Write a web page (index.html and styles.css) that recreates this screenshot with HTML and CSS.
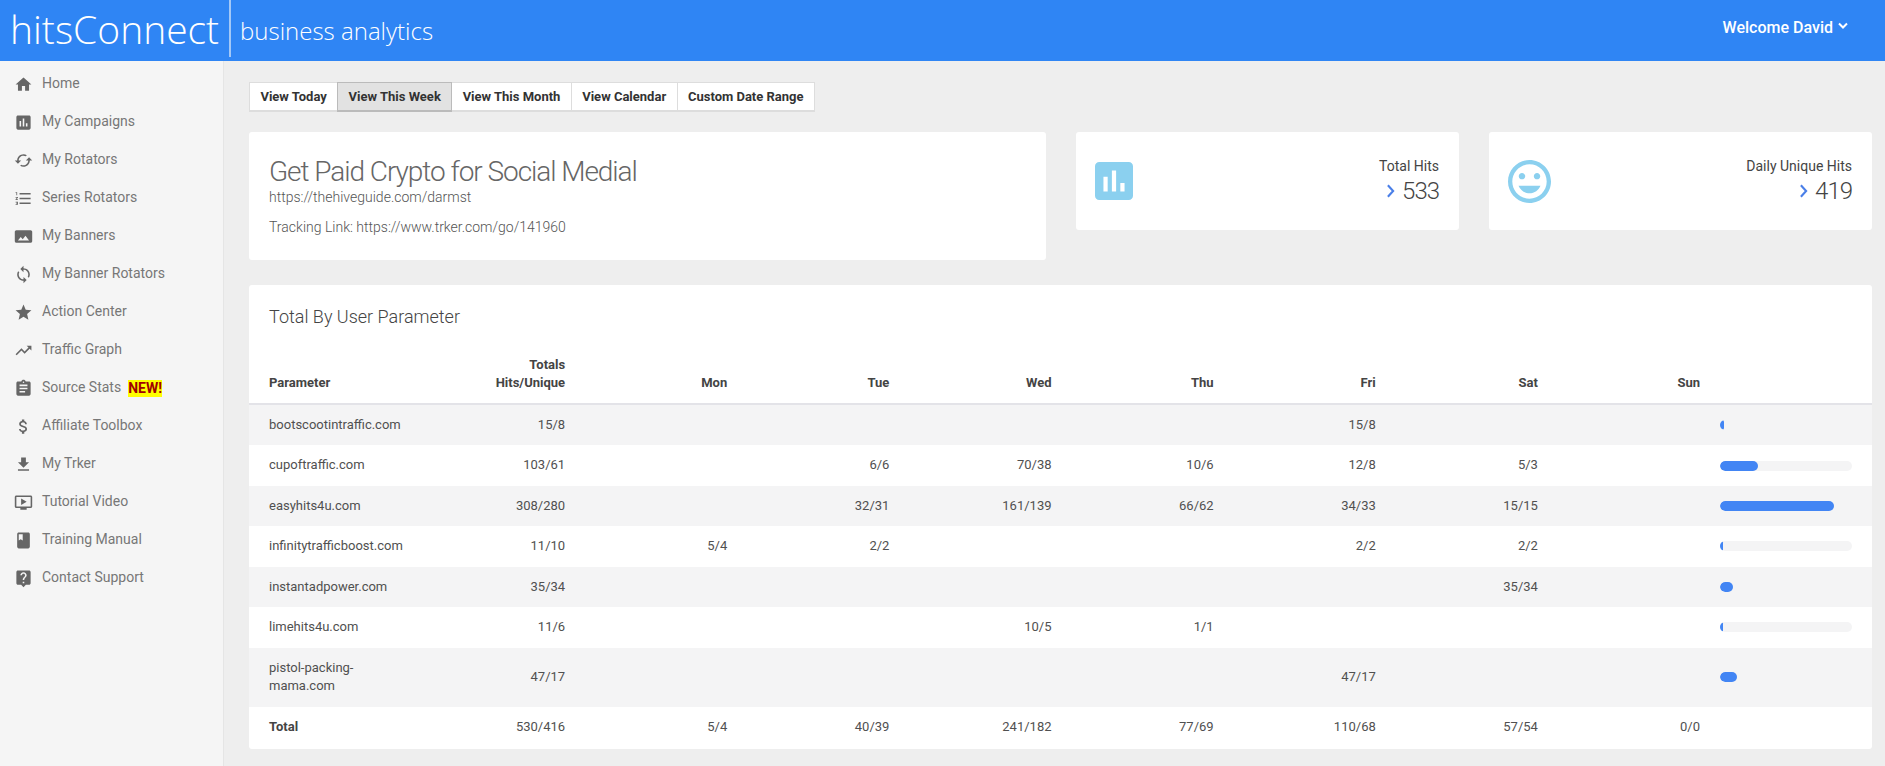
FILE: index.html
```html
<!DOCTYPE html>
<html lang="en">
<head>
  <meta charset="UTF-8" />
  <meta name="viewport" content="width=device-width, initial-scale=1.0"/>
  <title>hitsConnect</title>
  <link rel="stylesheet" href="styles.css">
</head>
<body>

  <header class="topbar">
    <div class="brand">hitsConnect</div>
    <div class="tagline">business analytics</div>
    <div class="welcome">Welcome David
      <svg class="caret" viewBox="0 0 24 24"><path d="M4 7l8 8 8-8" fill="none" stroke="#fff" stroke-width="4"/></svg>
    </div>
  </header>

  <div class="layout">
    <nav class="sidebar">
      <a class="nav-item"><svg viewBox="0 0 24 24"><path d="M10 20v-6h4v6h5v-8h3L12 3 2 12h3v8z"/></svg>Home</a>
      <a class="nav-item"><svg viewBox="0 0 24 24"><path d="M19 3H5c-1.1 0-2 .9-2 2v14c0 1.1.9 2 2 2h14c1.1 0 2-.9 2-2V5c0-1.1-.9-2-2-2zM9 17H7v-7h2v7zm4 0h-2V7h2v10zm4 0h-2v-4h2v4z"/></svg>My Campaigns</a>
      <a class="nav-item"><svg viewBox="0 0 24 24"><path d="M19 8l-4 4h3c0 3.31-2.69 6-6 6-1.01 0-1.97-.25-2.8-.7l-1.46 1.46C8.97 19.54 10.43 20 12 20c4.42 0 8-3.58 8-8h3l-4-4zM6 12c0-3.31 2.69-6 6-6 1.01 0 1.97.25 2.8.7l1.46-1.46C15.03 4.46 13.57 4 12 4c-4.42 0-8 3.58-8 8H1l4 4 4-4H6z"/></svg>My Rotators</a>
      <a class="nav-item"><svg viewBox="0 0 24 24"><path d="M2 17h2v.5H3v1h1v.5H2v1h3v-4H2v1zm1-9h1V4H2v1h1v3zm-1 3h1.8L2 13.1v.9h3v-1H3.2L5 10.9V10H2v1zm5-6v2h14V5H7zm0 14h14v-2H7v2zm0-6h14v-2H7v2z"/></svg>Series Rotators</a>
      <a class="nav-item"><svg viewBox="0 0 24 24"><path d="M23 18V6c0-1.1-.9-2-2-2H3c-1.1 0-2 .9-2 2v12c0 1.1.9 2 2 2h18c1.1 0 2-.9 2-2zM8.5 12.5l2.5 3.01L14.5 11l4.5 6H5l3.5-4.5z"/></svg>My Banners</a>
      <a class="nav-item"><svg viewBox="0 0 24 24"><path d="M12 4V1L8 5l4 4V6c3.31 0 6 2.69 6 6 0 1.01-.25 1.97-.7 2.8l1.46 1.46C19.54 15.03 20 13.57 20 12c0-4.42-3.58-8-8-8zm0 14c-3.31 0-6-2.69-6-6 0-1.01.25-1.97.7-2.8L5.24 7.74C4.46 8.97 4 10.43 4 12c0 4.42 3.58 8 8 8v3l4-4-4-4v3z"/></svg>My Banner Rotators</a>
      <a class="nav-item"><svg viewBox="0 0 24 24"><path d="M12 17.27L18.18 21l-1.64-7.03L22 9.24l-7.19-.61L12 2 9.19 8.63 2 9.24l5.46 4.73L5.82 21z"/></svg>Action Center</a>
      <a class="nav-item"><svg viewBox="0 0 24 24"><path d="M16 6l2.29 2.29-4.88 4.88-4-4L2 16.59 3.41 18l6-6 4 4 6.3-6.29L22 12V6z"/></svg>Traffic Graph</a>
      <a class="nav-item"><svg viewBox="0 0 24 24"><path d="M19 3h-4.18C14.4 1.84 13.3 1 12 1c-1.3 0-2.4.84-2.82 2H5c-1.1 0-2 .9-2 2v14c0 1.1.9 2 2 2h14c1.1 0 2-.9 2-2V5c0-1.1-.9-2-2-2zm-7 0c.55 0 1 .45 1 1s-.45 1-1 1-1-.45-1-1 .45-1 1-1zm2 14H7v-2h7v2zm3-4H7v-2h10v2zm0-4H7V7h10v2z"/></svg>Source Stats<span class="new-tag">NEW!</span></a>
      <a class="nav-item"><svg viewBox="0 0 24 24"><path d="M11.8 10.9c-2.27-.59-3-1.2-3-2.15 0-1.09 1.01-1.85 2.7-1.85 1.78 0 2.44.85 2.5 2.1h2.21c-.07-1.72-1.12-3.3-3.21-3.81V3h-3v2.16c-1.94.42-3.5 1.68-3.5 3.61 0 2.31 1.91 3.46 4.7 4.13 2.5.6 3 1.48 3 2.41 0 .69-.49 1.79-2.7 1.79-2.06 0-2.87-.92-2.98-2.1h-2.2c.12 2.19 1.76 3.42 3.68 3.83V21h3v-2.15c1.95-.37 3.5-1.5 3.5-3.55 0-2.84-2.43-3.81-4.7-4.4z"/></svg>Affiliate Toolbox</a>
      <a class="nav-item"><svg viewBox="0 0 24 24"><path d="M19 9h-4V3H9v6H5l7 7 7-7zM5 18v2h14v-2H5z"/></svg>My Trker</a>
      <a class="nav-item"><svg viewBox="0 0 24 24"><path d="M21 3H3c-1.11 0-2 .89-2 2v12c0 1.1.89 2 2 2h5v2h8v-2h5c1.1 0 1.99-.9 1.99-2L23 5c0-1.11-.9-2-2-2zm0 14H3V5h18v12zm-5-6l-7 4V7z"/></svg>Tutorial Video</a>
      <a class="nav-item"><svg viewBox="0 0 24 24"><path d="M18 2H6c-1.1 0-2 .9-2 2v16c0 1.1.9 2 2 2h12c1.1 0 2-.9 2-2V4c0-1.1-.9-2-2-2zM6 4h5v8l-2.5-1.5L6 12V4z"/></svg>Training Manual</a>
      <a class="nav-item"><svg viewBox="0 0 24 24"><path d="M19 2H5c-1.11 0-2 .9-2 2v14c0 1.1.89 2 2 2h4l3 3 3-3h4c1.1 0 2-.9 2-2V4c0-1.1-.9-2-2-2zm-6 16h-2v-2h2v2zm2.07-7.75l-.9.92C13.45 11.9 13 12.5 13 14h-2v-.5c0-1.1.45-2.1 1.17-2.83l1.24-1.26c.37-.36.59-.86.59-1.41 0-1.1-.9-2-2-2s-2 .9-2 2H8c0-2.21 1.79-4 4-4s4 1.79 4 4c0 .88-.36 1.68-.93 2.25z"/></svg>Contact Support</a>
    </nav>

    <main class="content">
      <div class="btn-group">
        <button class="btn">View Today</button>
        <button class="btn active">View This Week</button>
        <button class="btn">View This Month</button>
        <button class="btn">View Calendar</button>
        <button class="btn">Custom Date Range</button>
      </div>

      <div class="top-row">
        <section class="card info-card">
          <h2>Get Paid Crypto for Social Medial</h2>
          <div>https://thehiveguide.com/darmst</div>
          <p>Tracking Link: https://www.trker.com/go/141960</p>
        </section>

        <section class="card stat-card">
          <svg class="stat-icon" viewBox="3 3 18 18" preserveAspectRatio="none"><path d="M19 3H5c-1.1 0-2 .9-2 2v14c0 1.1.9 2 2 2h14c1.1 0 2-.9 2-2V5c0-1.1-.9-2-2-2zM9 17H7v-7h2v7zm4 0h-2V7h2v10zm4 0h-2v-4h2v4z"/></svg>
          <div class="stat-text">
            <div class="stat-label">Total Hits</div>
            <div class="stat-value"><svg class="chev" viewBox="0 0 10 16"><path d="M2 1.5l6 6.5-6 6.5" fill="none" stroke="#4a7fe8" stroke-width="2.4"/></svg>533</div>
          </div>
        </section>

        <section class="card stat-card">
          <svg class="stat-icon smile" viewBox="2 2 20 20"><path d="M11.99 2C6.47 2 2 6.48 2 12s4.47 10 9.99 10C17.52 22 22 17.52 22 12S17.52 2 11.99 2zM12 20c-4.42 0-8-3.58-8-8s3.58-8 8-8 8 3.58 8 8-3.58 8-8 8zm3.5-9c.83 0 1.5-.67 1.5-1.5S16.33 8 15.5 8 14 8.67 14 9.5s.67 1.5 1.5 1.5zm-7 0c.83 0 1.5-.67 1.5-1.5S9.33 8 8.5 8 7 8.67 7 9.5 7.67 11 8.5 11zm3.5 6.5c2.33 0 4.31-1.46 5.11-3.5H6.89c.8 2.04 2.78 3.5 5.11 3.5z"/></svg>
          <div class="stat-text">
            <div class="stat-label">Daily Unique Hits</div>
            <div class="stat-value"><svg class="chev" viewBox="0 0 10 16"><path d="M2 1.5l6 6.5-6 6.5" fill="none" stroke="#4a7fe8" stroke-width="2.4"/></svg>419</div>
          </div>
        </section>
      </div>

      <section class="card table-card">
        <h3>Total By User Parameter</h3>
        <table class="stats">
          <colgroup>
            <col class="col-param">
            <col span="8">
            <col class="col-bar">
          </colgroup>
          <thead>
            <tr><th class="left">Parameter</th><th>Totals<br>Hits/Unique</th><th>Mon</th><th>Tue</th><th>Wed</th><th>Thu</th><th>Fri</th><th>Sat</th><th>Sun</th><th></th></tr>
          </thead>
          <tbody>
            <tr><td class="left">bootscootintraffic.com</td><td>15/8</td><td></td><td></td><td></td><td></td><td>15/8</td><td></td><td></td><td class="bar-cell"><div class="track bare"><div class="fill" style="width:3%"></div></div></td></tr>
            <tr><td class="left">cupoftraffic.com</td><td>103/61</td><td></td><td>6/6</td><td>70/38</td><td>10/6</td><td>12/8</td><td>5/3</td><td></td><td class="bar-cell"><div class="track"><div class="fill" style="width:29%"></div></div></td></tr>
            <tr><td class="left">easyhits4u.com</td><td>308/280</td><td></td><td>32/31</td><td>161/139</td><td>66/62</td><td>34/33</td><td>15/15</td><td></td><td class="bar-cell"><div class="track bare"><div class="fill" style="width:86%"></div></div></td></tr>
            <tr><td class="left">infinitytrafficboost.com</td><td>11/10</td><td>5/4</td><td>2/2</td><td></td><td></td><td>2/2</td><td>2/2</td><td></td><td class="bar-cell"><div class="track"><div class="fill" style="width:2.5%"></div></div></td></tr>
            <tr><td class="left">instantadpower.com</td><td>35/34</td><td></td><td></td><td></td><td></td><td></td><td>35/34</td><td></td><td class="bar-cell"><div class="track bare"><div class="fill" style="width:10%"></div></div></td></tr>
            <tr><td class="left">limehits4u.com</td><td>11/6</td><td></td><td></td><td>10/5</td><td>1/1</td><td></td><td></td><td></td><td class="bar-cell"><div class="track"><div class="fill" style="width:2.5%"></div></div></td></tr>
            <tr><td class="left">pistol-packing-mama.com</td><td>47/17</td><td></td><td></td><td></td><td></td><td>47/17</td><td></td><td></td><td class="bar-cell"><div class="track bare"><div class="fill" style="width:13%"></div></div></td></tr>
            <tr><td class="left strong">Total</td><td>530/416</td><td>5/4</td><td>40/39</td><td>241/182</td><td>77/69</td><td>110/68</td><td>57/54</td><td>0/0</td><td></td></tr>
          </tbody>
        </table>
      </section>
    </main>
  </div>

</body>
</html>
```

FILE: styles.css
```css
* {
  box-sizing: border-box;
}
body {
  font-family: Roboto, Arial, sans-serif;
  font-size: 13px;
  line-height: 1.42;
  margin: 0;
  color: #444;
  background-color: #eeeeee;
  min-height: 100vh;
}

/* Top bar */
.topbar {
  display: flex;
  align-items: flex-start;
  height: 61px;
  background: #2f85f4;
  color: #fff;
}
.brand {
  font-family: "Open Sans", sans-serif;
  font-weight: 300;
  font-size: 39px;
  line-height: 57px;
  width: 231px;
  height: 57px;
  padding-left: 10px;
  border-right: 2px solid #a3c8f7;
}
.tagline {
  font-family: "Open Sans", sans-serif;
  font-weight: 300;
  font-size: 24px;
  line-height: 61px;
  padding-left: 9px;
}
.welcome {
  margin-left: auto;
  padding: 18px 36px 0 0;
  font-size: 16px;
  font-weight: 500;
  line-height: 20px;
  display: flex;
  align-items: flex-start;
  gap: 4px;
}
.caret {
  width: 12px;
  height: 12px;
  margin-top: 2px;
}

/* Sidebar */
.layout {
  display: flex;
  align-items: stretch;
  min-height: 705px;
}
.sidebar {
  width: 224px;
  flex: none;
  padding-top: 4px;
  background: #f5f5f5;
  border-right: 1px solid #e5e5e5;
}
.nav-item {
  display: flex;
  align-items: center;
  height: 38px;
  padding-left: 14px;
  font-size: 14px;
  color: #777;
}
.nav-item svg {
  width: 19px;
  height: 19px;
  margin-right: 9px;
  fill: #666;
  flex: none;
}
.new-tag {
  margin-left: 7px;
  padding: 0;
  background: #ffff00;
  color: #a00000;
  font-weight: 700;
  line-height: 17px;
}

/* Main column */
.content {
  flex: 1;
  min-width: 0;
  padding: 21px 13px 17px 25px;
}
.btn-group {
  display: flex;
  margin-bottom: 20px;
}
.btn {
  font-family: Roboto, Arial, sans-serif;
  font-size: 13px;
  font-weight: 700;
  height: 30px;
  padding: 0 10.4px;
  background: #fff;
  color: #333;
  border: 1px solid #dddddd;
  border-bottom-width: 2px;
  margin-right: -1px;
}
.btn.active {
  position: relative;
  background: #e2e2e2;
  border-color: #bbbbbb;
}

.card {
  background: #fff;
  border-radius: 3px;
}
.top-row {
  display: flex;
  gap: 30px;
  align-items: flex-start;
  margin-bottom: 25px;
}
.info-card {
  width: 797px;
  height: 128px;
  padding: 23px 20px;
  color: #555;
}
.info-card h2 {
  margin: 0;
  font-size: 28px;
  font-weight: 300;
  line-height: 33px;
  letter-spacing: -1.05px;
  color: #666;
}
.info-card div {
  font-weight: 300;
  font-size: 14px;
  line-height: 18px;
}
.info-card p {
  margin: 12px 0 0;
  font-weight: 300;
  font-size: 14px;
  line-height: 18px;
}
.stat-card {
  width: 383px;
  height: 98px;
  display: flex;
  align-items: center;
  justify-content: space-between;
  padding: 0 20px 0 19px;
}
.stat-icon {
  width: 38px;
  height: 38px;
  fill: #8bd0ef;
}
.stat-icon.smile {
  width: 43px;
  height: 43px;
}
.stat-text {
  text-align: right;
  margin-top: -1px;
}
.stat-label {
  font-size: 14px;
  line-height: 20px;
  color: #444;
}
.stat-value {
  font-size: 24px;
  font-weight: 300;
  line-height: 30px;
  letter-spacing: -1px;
  display: flex;
  align-items: center;
  justify-content: flex-end;
  gap: 7px;
}
.chev {
  width: 9px;
  height: 14px;
}

/* Table */
.table-card {
  height: 464px;
}
.table-card h3 {
  margin: 0;
  height: 60px;
  padding: 20px 20px 0;
  font-size: 18px;
  font-weight: 300;
  line-height: 24px;
}
.stats {
  width: 100%;
  border-collapse: collapse;
  table-layout: fixed;
}
.col-param {
  width: 174px;
}
.col-bar {
  width: 152px;
}
.stats th, .stats td {
  padding: 11px 20px 11px 0;
  text-align: right;
  vertical-align: middle;
  color: #505050;
}
.stats th {
  vertical-align: bottom;
  font-weight: 700;
  padding-bottom: 10px;
  border-bottom: 2px solid #e3e3e8;
  color: #444;
}
.stats .left {
  text-align: left;
  padding-left: 20px;
}
.stats .strong {
  font-weight: 700;
  color: #444;
}
.stats tbody tr:nth-child(odd) td {
  background: #f4f4f5;
}
.stats tbody tr:last-child td {
  background: #fff;
}
.track {
  height: 10px;
  border-radius: 5px;
  background: #f4f4f5;
  overflow: hidden;
}
.track.bare {
  background: transparent;
}
.fill {
  height: 100%;
  border-radius: 5px;
  background: #4285f4;
}
```
